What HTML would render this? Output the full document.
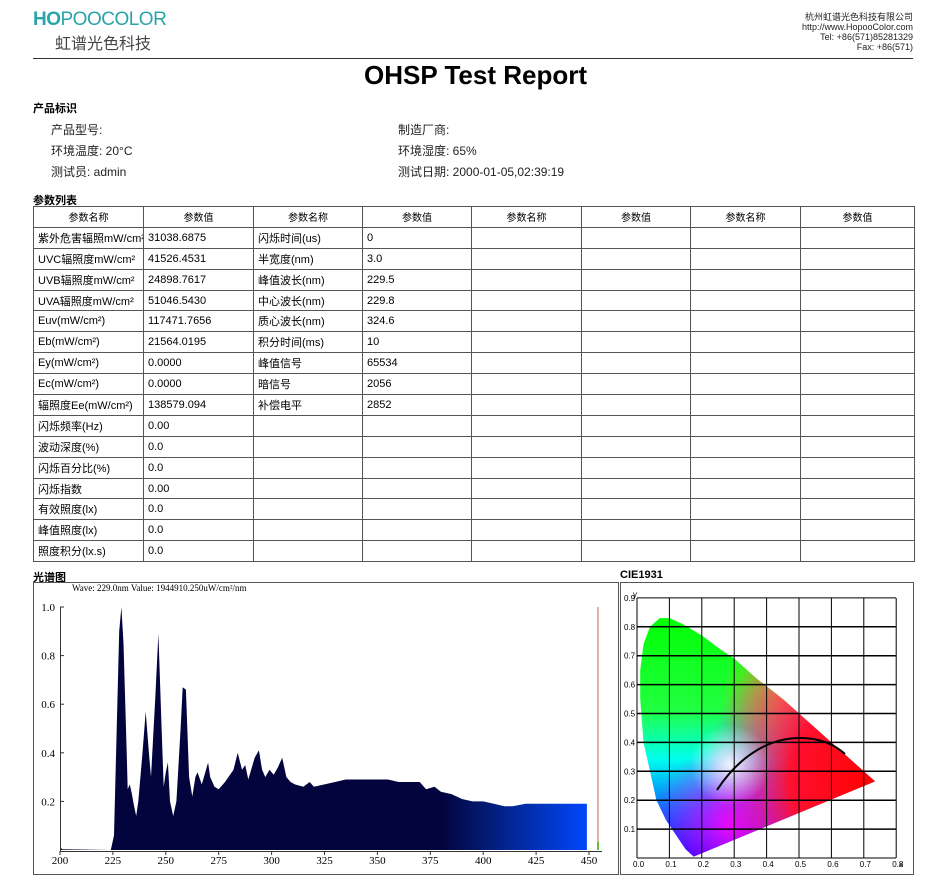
<!DOCTYPE html>
<html><head><meta charset="utf-8"><style>
*{margin:0;padding:0;box-sizing:border-box}
body{width:951px;height:876px;background:#fff;position:relative;overflow:hidden;font-family:"Liberation Sans","Noto Sans CJK SC",sans-serif;color:#000}
.a{position:absolute;white-space:nowrap}
table{position:absolute;left:33px;top:206px;width:881px;border-collapse:collapse;font-size:11px;table-layout:fixed}
td{border:1px solid #555;height:20.9px;padding:0 4px;white-space:nowrap;overflow:hidden;vertical-align:middle}
tr.h td{text-align:center;font-size:10px}
.lbl{font-size:12px;color:#222}
</style></head><body>
<div class="a" style="left:33px;top:9px;font-size:19px;color:#2aa3aa;letter-spacing:-0.5px"><b>HO</b>POOCOLOR</div>
<div class="a" style="left:55px;top:30px;font-size:16px;color:#444;font-family:'Noto Sans CJK SC',sans-serif">虹谱光色科技</div>
<div class="a" style="right:38px;top:12px;font-size:9px;line-height:10px;text-align:right;color:#222">杭州虹谱光色科技有限公司<br>http://www.HopooColor.com<br>Tel: +86(571)85281329<br>Fax: +86(571)</div>
<div class="a" style="left:33px;top:58px;width:880px;height:1px;background:#333"></div>
<div class="a" style="left:0;width:951px;top:60px;text-align:center;font-size:26px;font-weight:bold">OHSP Test Report</div>
<div class="a" style="left:33px;top:100px;font-size:11px;font-weight:bold">产品标识</div>
<div class="a lbl" style="left:51px;top:121px">产品型号:</div>
<div class="a lbl" style="left:398px;top:121px">制造厂商:</div>
<div class="a lbl" style="left:51px;top:142px">环境温度: 20°C</div>
<div class="a lbl" style="left:398px;top:142px">环境湿度: 65%</div>
<div class="a lbl" style="left:51px;top:163px">测试员: admin</div>
<div class="a lbl" style="left:398px;top:163px">测试日期: 2000-01-05,02:39:19</div>
<div class="a" style="left:33px;top:192px;font-size:11px;font-weight:bold">参数列表</div>
<table>
<colgroup><col style="width:110px"><col style="width:110px"><col style="width:109px"><col style="width:109px"><col style="width:110px"><col style="width:109px"><col style="width:110px"><col style="width:114px"></colgroup>
<tr class="h"><td>参数名称</td><td>参数值</td><td>参数名称</td><td>参数值</td><td>参数名称</td><td>参数值</td><td>参数名称</td><td>参数值</td></tr>
<tr><td>紫外危害辐照mW/cm²</td><td>31038.6875</td><td>闪烁时间(us)</td><td>0</td><td></td><td></td><td></td><td></td></tr>
<tr><td>UVC辐照度mW/cm²</td><td>41526.4531</td><td>半宽度(nm)</td><td>3.0</td><td></td><td></td><td></td><td></td></tr>
<tr><td>UVB辐照度mW/cm²</td><td>24898.7617</td><td>峰值波长(nm)</td><td>229.5</td><td></td><td></td><td></td><td></td></tr>
<tr><td>UVA辐照度mW/cm²</td><td>51046.5430</td><td>中心波长(nm)</td><td>229.8</td><td></td><td></td><td></td><td></td></tr>
<tr><td>Euv(mW/cm²)</td><td>117471.7656</td><td>质心波长(nm)</td><td>324.6</td><td></td><td></td><td></td><td></td></tr>
<tr><td>Eb(mW/cm²)</td><td>21564.0195</td><td>积分时间(ms)</td><td>10</td><td></td><td></td><td></td><td></td></tr>
<tr><td>Ey(mW/cm²)</td><td>0.0000</td><td>峰值信号</td><td>65534</td><td></td><td></td><td></td><td></td></tr>
<tr><td>Ec(mW/cm²)</td><td>0.0000</td><td>暗信号</td><td>2056</td><td></td><td></td><td></td><td></td></tr>
<tr><td>辐照度Ee(mW/cm²)</td><td>138579.094</td><td>补偿电平</td><td>2852</td><td></td><td></td><td></td><td></td></tr>
<tr><td>闪烁频率(Hz)</td><td>0.00</td><td></td><td></td><td></td><td></td><td></td><td></td></tr>
<tr><td>波动深度(%)</td><td>0.0</td><td></td><td></td><td></td><td></td><td></td><td></td></tr>
<tr><td>闪烁百分比(%)</td><td>0.0</td><td></td><td></td><td></td><td></td><td></td><td></td></tr>
<tr><td>闪烁指数</td><td>0.00</td><td></td><td></td><td></td><td></td><td></td><td></td></tr>
<tr><td>有效照度(lx)</td><td>0.0</td><td></td><td></td><td></td><td></td><td></td><td></td></tr>
<tr><td>峰值照度(lx)</td><td>0.0</td><td></td><td></td><td></td><td></td><td></td><td></td></tr>
<tr><td>照度积分(lx.s)</td><td>0.0</td><td></td><td></td><td></td><td></td><td></td><td></td></tr>
</table>
<div class="a" style="left:33px;top:569px;font-size:11px;font-weight:bold">光谱图</div>
<div class="a" style="left:620px;top:569px;font-size:11px;font-weight:bold">CIE1931</div>
<svg class="a" style="left:0;top:0" width="951" height="876" xmlns="http://www.w3.org/2000/svg">
<defs>
<linearGradient id="sg" x1="60" x2="589" y1="0" y2="0" gradientUnits="userSpaceOnUse">
<stop offset="0" stop-color="#03033d"/><stop offset="0.72" stop-color="#03033d"/><stop offset="0.8" stop-color="#031a70"/><stop offset="1" stop-color="#0048ff"/></linearGradient>
<linearGradient id="cg" x1="0" y1="610" x2="0" y2="858" gradientUnits="userSpaceOnUse">
<stop offset="0" stop-color="#00ff00"/><stop offset="0.4" stop-color="#20ff40"/><stop offset="0.6" stop-color="#00ffee"/><stop offset="0.8" stop-color="#0070ff"/><stop offset="1" stop-color="#0000ff"/></linearGradient>
<radialGradient id="rr" cx="875" cy="780" r="170" gradientUnits="userSpaceOnUse"><stop offset="0" stop-color="#ff0000"/><stop offset="0.5" stop-color="#ff1030"/><stop offset="1" stop-color="#ff00ff" stop-opacity="0"/></radialGradient>
<radialGradient id="yy" cx="790" cy="700" r="70" gradientUnits="userSpaceOnUse"><stop offset="0" stop-color="#ffa000"/><stop offset="1" stop-color="#ffa000" stop-opacity="0"/></radialGradient>
<radialGradient id="mm" cx="730" cy="825" r="80" gradientUnits="userSpaceOnUse"><stop offset="0" stop-color="#ff00ff" stop-opacity="0.9"/><stop offset="1" stop-color="#ff00ff" stop-opacity="0"/></radialGradient>
<radialGradient id="ww" cx="730" cy="765" r="40" gradientUnits="userSpaceOnUse"><stop offset="0" stop-color="#fff" stop-opacity="0.9"/><stop offset="1" stop-color="#fff" stop-opacity="0"/></radialGradient>
<clipPath id="cl"><path id="loc" d=""/></clipPath>
</defs>
<rect x="33.5" y="582.5" width="585" height="292" fill="none" stroke="#555"/>
<rect x="620.5" y="582.5" width="293" height="292" fill="none" stroke="#555"/>
<text x="72" y="591" font-family="Liberation Serif,serif" font-size="9">Wave: 229.0nm Value: 1944910.250uW/cm²/nm</text>
<path id="sp" fill="url(#sg)"/>
<line x1="60.5" y1="607" x2="60.5" y2="851" stroke="#333"/>
<line x1="60" y1="851.5" x2="602" y2="851.5" stroke="#333"/>
<line x1="598" y1="607" x2="598" y2="850" stroke="#c06060"/>
<line x1="598" y1="842" x2="598" y2="850" stroke="#60c040" stroke-width="2"/>
<g font-family="Liberation Serif,serif" font-size="11" id="sl"></g>
<g clip-path="url(#cl)">
<rect x="630" y="600" width="260" height="260" fill="url(#cg)"/>
<rect x="630" y="600" width="260" height="260" fill="url(#yy)"/>
<rect x="630" y="600" width="260" height="260" fill="url(#mm)"/>
<rect x="630" y="600" width="260" height="260" fill="url(#rr)"/>
<rect x="630" y="600" width="260" height="260" fill="url(#ww)"/>
</g>
<g id="grid" stroke="#000" stroke-width="1"></g>
<path d="M717,790 C740,755 770,738 800,738 C820,738 835,745 845,754" fill="none" stroke="#000" stroke-width="2"/>
<g id="cl2" font-family="Liberation Sans,sans-serif" font-size="8"></g>
</svg>
<script>
var d=[[200,0.015],[201,0.003],[224,0],[225.5,0.06],[226.5,0.4],[228,0.9],[229,1.0],[230,0.85],[231.5,0.4],[232,0.25],[233,0.27],[234,0.23],[235,0.18],[236,0.14],[237,0.2],[239,0.4],[240.5,0.57],[242,0.4],[243,0.3],[245,0.62],[246.5,0.89],[248,0.5],[249,0.26],[250,0.32],[251,0.36],[252,0.2],[253.5,0.14],[255,0.2],[257,0.5],[258,0.67],[259.5,0.66],[261,0.3],[262.5,0.22],[264,0.3],[265,0.32],[267,0.27],[268,0.3],[270,0.36],[271,0.3],[273,0.26],[275,0.25],[278,0.28],[282,0.33],[284,0.4],[286,0.33],[287.5,0.35],[289,0.29],[292,0.38],[294,0.41],[295.5,0.33],[297,0.3],[299,0.33],[301,0.31],[303,0.34],[305,0.38],[307,0.3],[309,0.28],[311,0.27],[315,0.26],[318,0.28],[320,0.26],[325,0.27],[330,0.28],[335,0.29],[340,0.29],[345,0.29],[350,0.29],[355,0.29],[360,0.28],[365,0.28],[370,0.28],[373,0.25],[377,0.26],[380,0.24],[385,0.23],[390,0.21],[395,0.2],[400,0.2],[405,0.19],[410,0.18],[414,0.18],[420,0.19],[425,0.19],[449,0.19],[449,0],[200,0]];
var p="";d.forEach(function(q,i){p+=(i?"L":"M")+(60+(q[0]-200)*2.116).toFixed(1)+","+(850-q[1]*243).toFixed(1)});
document.getElementById("sp").setAttribute("d",p+"Z");
var s="";for(var w=200;w<=450;w+=25){var x=60+(w-200)*2.116;s+='<text x="'+x+'" y="864" text-anchor="middle">'+w+'</text><line x1="'+x+'" y1="851" x2="'+x+'" y2="855" stroke="#333"/>';}
[0.2,0.4,0.6,0.8,1.0].forEach(function(v){var y=850-v*243;s+='<text x="55" y="'+(y+4)+'" text-anchor="end">'+v.toFixed(1)+'</text><line x1="60" y1="'+y+'" x2="64" y2="'+y+'" stroke="#333"/>';});
document.getElementById("sl").innerHTML=s;
var L=[[0.175,0.005],[0.17,0.01],[0.15,0.03],[0.12,0.08],[0.09,0.13],[0.06,0.2],[0.04,0.3],[0.02,0.4],[0.01,0.55],[0.01,0.65],[0.02,0.74],[0.04,0.8],[0.07,0.83],[0.1,0.83],[0.14,0.81],[0.2,0.77],[0.26,0.72],[0.3,0.69],[0.37,0.62],[0.45,0.55],[0.52,0.48],[0.6,0.4],[0.69,0.31],[0.735,0.265]];
var lp="";L.forEach(function(q,i){lp+=(i?"L":"M")+(637+q[0]*324).toFixed(1)+","+(858-q[1]*289).toFixed(1)});
document.getElementById("loc").setAttribute("d",lp+"Z");
var g="",t="";for(var i=0;i<=8;i++){var x=637+i*32.4;g+='<line x1="'+x+'" y1="598" x2="'+x+'" y2="858"/>';t+='<text x="'+(x-4)+'" y="867">'+(i==0?'0.0':(i/10).toFixed(1))+'</text>';}
for(var j=0;j<=9;j++){var y=858-j*28.9;g+='<line x1="637" y1="'+y+'" x2="896" y2="'+y+'"'+(j>0&&j<9?' stroke-width="1.5"':'')+'/>';if(j>0)t+='<text x="624" y="'+(y+3)+'">'+(j/10).toFixed(1)+'</text>';}
t+='<text x="899" y="867">x</text><text x="633" y="597">y</text>';
document.getElementById("grid").innerHTML=g;document.getElementById("cl2").innerHTML=t;
</script>
</body></html>
